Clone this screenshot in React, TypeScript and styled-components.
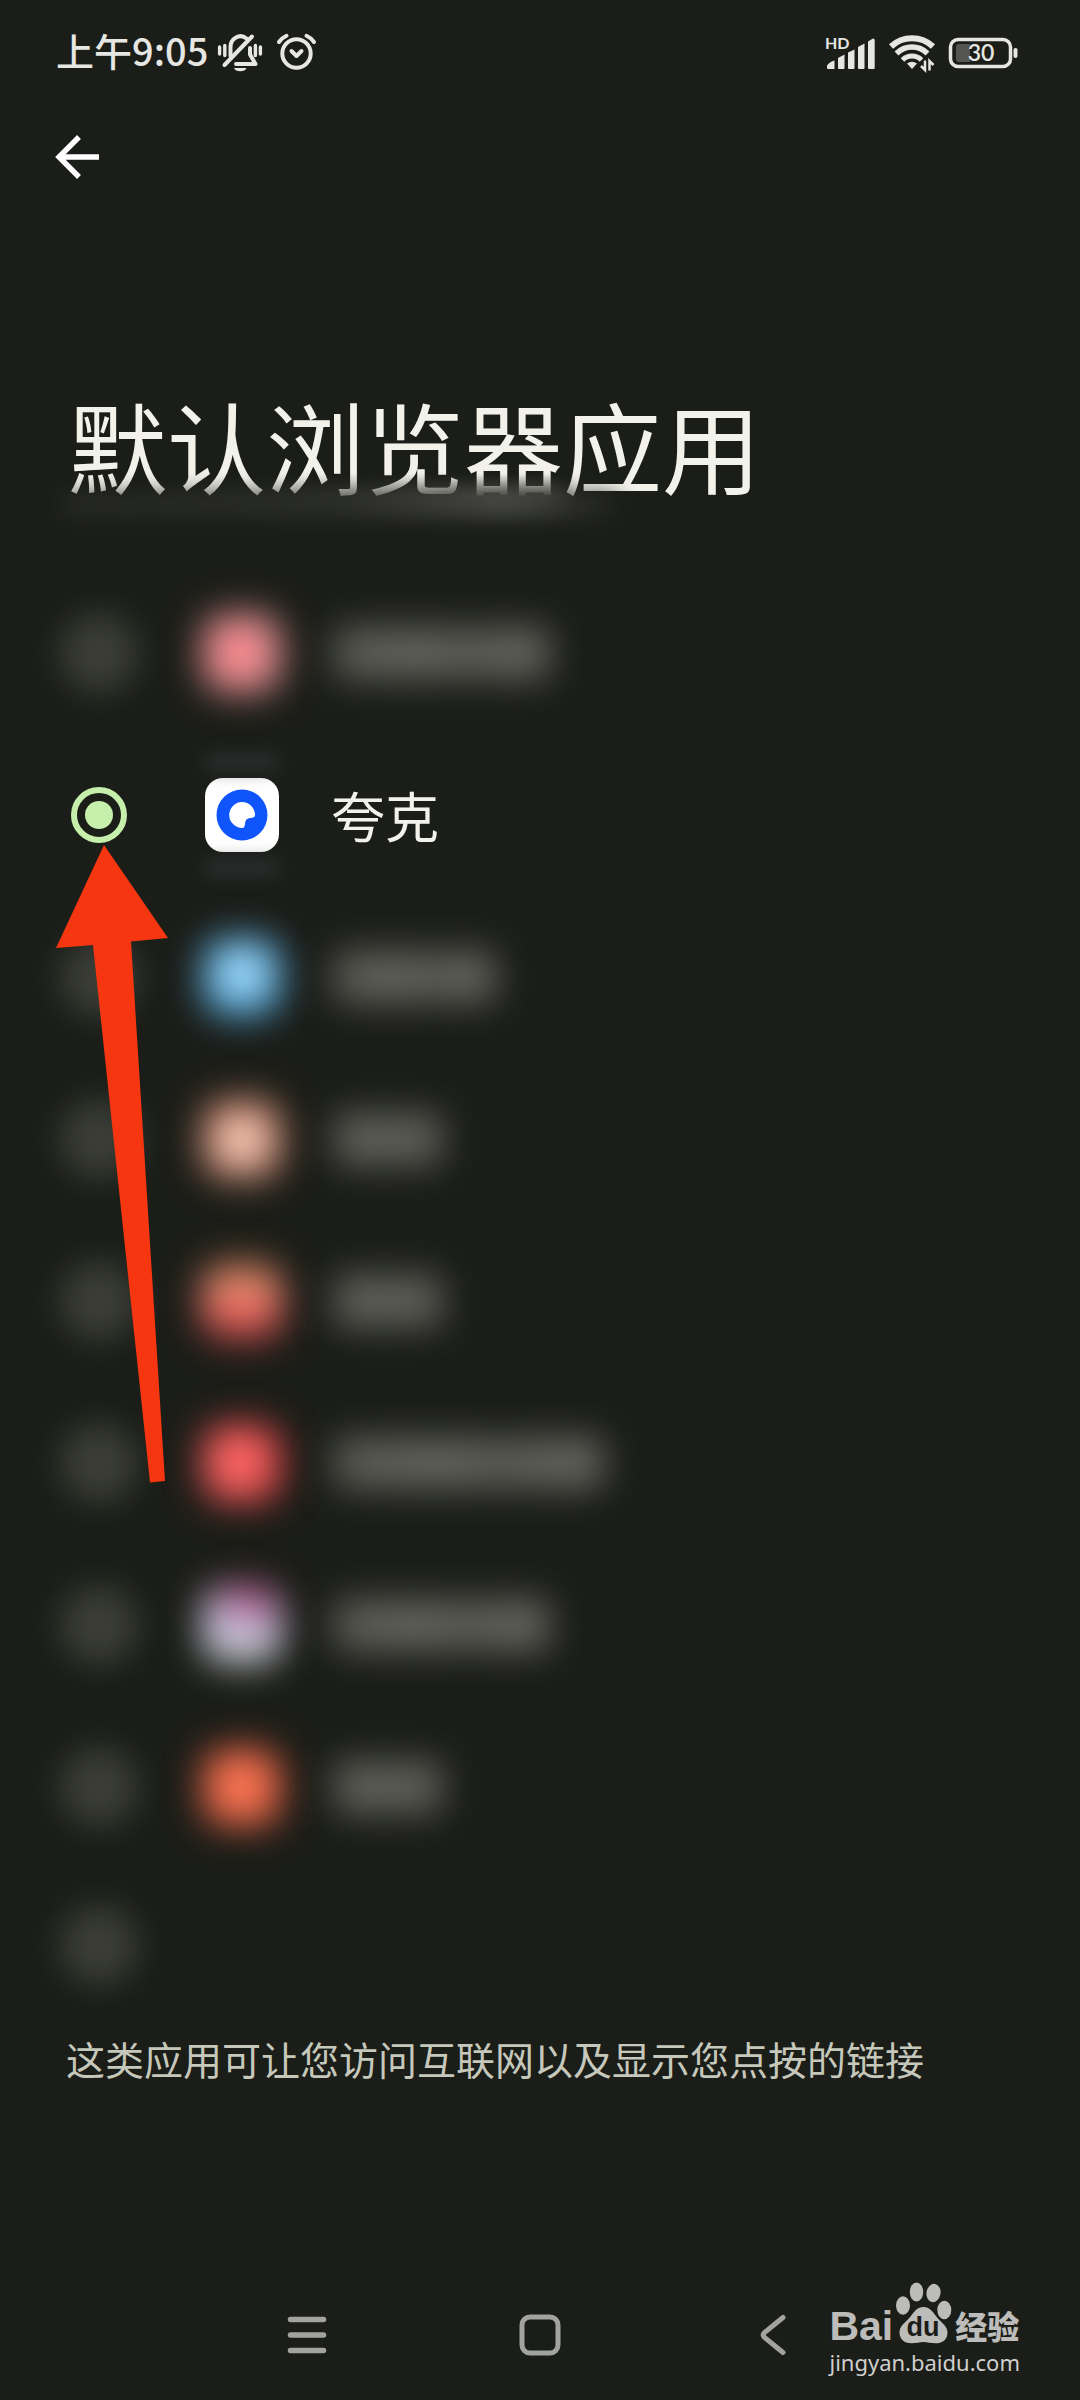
import React, { useState } from "react";
import styled, { createGlobalStyle, css } from "styled-components";

const BG = "#1b1d18";
const INK = "#f2f1ea";
const STATUS_INK = "#e6e6e3";
const NAV_INK = "#a2a3a1";
const MARK_INK = "#bcbcba";

const GlobalStyle = createGlobalStyle`
  *, *::before, *::after { box-sizing: border-box; }
  html, body { margin: 0; background: ${BG}; }
  body { font-family: "Noto Sans CJK SC", "Noto Sans", sans-serif; color: ${INK}; }
  button { border: 0; padding: 0; margin: 0; background: none; color: inherit; font: inherit; cursor: pointer; }
`;

const Screen = styled.div`
  position: relative;
  min-height: 100vh;
  display: flex;
  flex-direction: column;
  overflow: hidden;
  background: ${BG};
`;

const StatusBar = styled.header`
  height: 104px;
  padding: 2px 62px 0 56px;
  display: flex;
  align-items: center;
  justify-content: space-between;
  color: ${STATUS_INK};

  svg {
    overflow: visible;
  }
`;

const StatusGroup = styled.div<{ $gap: number }>`
  display: flex;
  align-items: center;
  gap: ${(p) => p.$gap}px;
`;

const Clock = styled.time`
  padding-bottom: 6px;
  font-size: 38px;
  line-height: 48px;
  font-weight: 500;
`;

const TopBar = styled.div`
  height: 106px;
  padding: 0 48px;
  display: flex;
  align-items: center;
`;

const BackButton = styled.button`
  width: 58px;
  height: 58px;
  display: grid;
  place-items: center;
`;

const Title = styled.h1`
  position: relative;
  margin: 174px 68px 0;
  font-size: 99px;
  line-height: 120px;
  font-weight: 400;
`;

const TitleFade = styled.span`
  position: absolute;
  left: 60px;
  top: 90px;
  width: 450px;
  height: 50px;
  background: linear-gradient(to bottom, rgba(62, 63, 58, 0), rgba(62, 63, 58, 0.9) 22px, rgba(44, 46, 41, 0.5) 36px, rgba(27, 29, 24, 0));
  mask-image: linear-gradient(
    to right,
    transparent,
    rgba(0, 0, 0, 0.15) 130px,
    rgba(0, 0, 0, 0.6) 290px,
    #000 360px,
    #000 420px,
    transparent
  );
`;

const TitleGlow = styled.span`
  position: absolute;
  left: -8px;
  top: 108px;
  width: 560px;
  height: 26px;
  border-radius: 13px;
  background: linear-gradient(to right, #292b27, #30322d 50%, #50514c 80%, #20221d);
  filter: blur(10px);
  opacity: 0.75;
`;

const AppList = styled.div`
  margin-top: 68px;
  display: flex;
  flex-direction: column;
`;

const Row = styled.label`
  position: relative;
  height: 162px;
  padding: 0 71px;
  display: flex;
  align-items: center;
  cursor: pointer;

  &:last-child {
    height: 154px;
  }
`;

const obscured = css`
  filter: blur(18px);
`;

const Radio = styled.input<{ $hidden: boolean }>`
  appearance: none;
  flex: none;
  width: 56px;
  height: 56px;
  margin: 0;
  border: 6px solid #c4c8ba;
  border-radius: 50%;
  display: grid;
  place-items: center;
  ${(p) => p.$hidden && obscured}

  &:checked {
    border-color: #c6efac;
  }

  &:checked::before {
    content: "";
    width: 28px;
    height: 28px;
    border-radius: 50%;
    background: #c6efac;
  }
`;

const HiddenIcon = styled.span<{ $fill: string }>`
  flex: none;
  width: 80px;
  height: 80px;
  margin-left: 75px;
  border-radius: 24px;
  background: ${(p) => p.$fill};
  ${obscured}
`;

const HiddenName = styled.span<{ $chars: number }>`
  flex: none;
  width: ${(p) => p.$chars * 54}px;
  height: 52px;
  margin-left: 51px;
  border-radius: 8px;
  background: linear-gradient(to right, #595a54, #64655f 40%, #5a5b55 60%, #676862);
  ${obscured}
`;

const AppIcon = styled.span`
  position: relative;
  flex: none;
  width: 74px;
  height: 74px;
  margin-left: 78px;
  display: grid;

  &::before,
  &::after {
    content: "";
    position: absolute;
    left: 0;
    right: 0;
    height: 12px;
    background: #323638;
    filter: blur(9px);
  }
  &::before {
    top: -22px;
  }
  &::after {
    bottom: -22px;
  }
`;

const AppName = styled.span`
  margin-left: 52px;
  font-size: 54px;
  line-height: 72px;
`;

const Pointer = styled.svg`
  position: absolute;
  left: 56px;
  top: 111px;
  z-index: 1;
  pointer-events: none;
`;

const Note = styled.p`
  margin: 6px 66px 0;
  padding-top: 2px;
  font-size: 39px;
  line-height: 56px;
  color: #c5c8bb;
`;

const NavBar = styled.nav`
  height: 130px;
  margin-top: auto;
  display: flex;
  align-items: center;
  justify-content: center;
  gap: 185px;
  color: ${NAV_INK};
`;

const NavButton = styled.button`
  width: 48px;
  height: 48px;
  display: grid;
  place-items: center;
`;

const Watermark = styled.a`
  position: absolute;
  right: 60px;
  bottom: 20px;
  display: flex;
  flex-direction: column;
  align-items: flex-start;
  color: ${MARK_INK};
  text-decoration: none;
`;

const Brand = styled.span`
  display: flex;
  align-items: flex-end;
  gap: 2px;
  height: 62px;
`;

const BrandLatin = styled.span`
  font-family: "Liberation Sans", Arial, sans-serif;
  font-size: 41px;
  line-height: 36px;
  font-weight: 700;
`;

const BrandHan = styled.span`
  font-size: 32px;
  line-height: 38px;
  font-weight: 900;
`;

const Site = styled.span`
  font-family: "Noto Sans", sans-serif;
  font-size: 22px;
  line-height: 36px;
  color: #cfcfcd;
`;

const MutedBell = () => (
  <svg width="50" height="40" viewBox="217 33 50 40" fill="none" stroke="currentColor" strokeWidth="3.4" strokeLinecap="round" aria-hidden="true">
    <path d="M219.600 47v7M224.800 45.500v10M260.400 47v7M255.400 45.500v10" />
    <path d="M230.500 56V47.500a10 11 0 0 1 16-9" strokeWidth="4" />
    <path d="M252 36.500 224.500 65" strokeWidth="4" />
    <path d="M250 48v6.500l5.500 9.500H236" strokeWidth="4" strokeLinejoin="round" />
    <path d="M234 68h12.500a6.500 4.500 0 0 1-12.500 0z" fill="currentColor" stroke="none" />
  </svg>
);

const Alarm = () => (
  <svg width="42" height="40" viewBox="276 33 42 40" fill="none" stroke="currentColor" strokeWidth="4" strokeLinecap="round" aria-hidden="true">
    <circle cx="296.500" cy="53.500" r="14.200" />
    <path d="m291.500 51 5 5 5-5" strokeLinejoin="round" />
    <path d="M279 42a19 19 0 0 1 7.500-6.200M314 42a19 19 0 0 0-7.500-6.200" />
  </svg>
);

const Signal = () => (
  <svg width="52" height="40" viewBox="824 32 52 40" fill="currentColor" aria-hidden="true">
    <text x="825" y="48" fontSize="16" fontWeight="700" fontFamily="Lato, sans-serif">HD</text>
    <path d="M827 67v-2.500q3-4 7.500-5v8.500h-6.500q-1 0-1-1zM838 67V57l6.500-3.500V67q0 1-1 1H839q-1 0-1-1zM848 67V51.500l6.500-3V67q0 1-1 1H849q-1 0-1-1zM858 67V46l6.500-3.500V67q0 1-1 1H859q-1 0-1-1zM868 67V40.500l5-3q1.700 0 1.700 1.500v28q0 1-1 1H869q-1 0-1-1z" />
  </svg>
);

const Wifi = () => (
  <svg width="48" height="38" viewBox="887 34 48 38" fill="none" stroke="currentColor" aria-hidden="true">
    <path d="M890 46.500a31 31 0 0 1 42 0" strokeWidth="6" />
    <path d="M895.500 53.500a22 22 0 0 1 31 0" strokeWidth="5.500" />
    <path d="M901.500 60a13.500 13.500 0 0 1 19 0" strokeWidth="5" />
    <path d="m911 69-5-5.500q5-3.500 10 0z" fill="currentColor" stroke="none" />
    <path d="M924 60.500V70l-4-4M928.500 70.500V61l4 4" strokeWidth="2.500" />
  </svg>
);

const Battery = () => (
  <svg width="70" height="32" viewBox="948 36 70 32" fill="none" aria-hidden="true">
    <rect x="950.500" y="38.500" width="60" height="27" rx="7.500" stroke="currentColor" strokeWidth="3.500" />
    <path d="M970 43h-11q-3 0-3 3v12q0 3 3 3h11z" fill="#555653" />
    <rect x="1013.500" y="47" width="4" height="10" rx="2" fill="currentColor" />
    <text x="981" y="60" textAnchor="middle" fontSize="23" fontWeight="600" fontFamily="Lato, sans-serif" fill="currentColor">30</text>
  </svg>
);

const BackArrow = () => (
  <svg width="46" height="46" viewBox="54 134 46 46" fill="none" stroke="#fff" strokeWidth="5.400" aria-hidden="true">
    <path d="M99 157H60M79 137 59 157l20 20" />
  </svg>
);

const QuarkLogo = () => (
  <svg width="74" height="74" viewBox="0 0 74 74" aria-hidden="true">
    <rect width="74" height="74" rx="18" fill="#fff" />
    <circle cx="37" cy="37" r="25.500" fill="#0f55fb" />
    <path d="M37 24a13 13 0 0 1 13 13.500q-.3 2-2.500 2.200Q40 39.500 40 46q-.3 3.700-2.500 4A13 13 0 0 1 37 24z" fill="#fff" />
  </svg>
);

const Paw = () => (
  <svg width="58" height="63" viewBox="894 2284 58 63" fill="currentColor" aria-hidden="true">
    <ellipse cx="902" cy="2308.500" rx="7" ry="9.300" />
    <ellipse cx="915.500" cy="2295" rx="6.700" ry="9.500" />
    <ellipse cx="932.500" cy="2296" rx="7" ry="9.200" transform="rotate(10 932.500 2296)" />
    <ellipse cx="943.300" cy="2313" rx="7" ry="9.300" />
    <path d="M922.500 2310c7 0 10 6 14 11 5 5.500 10 8.500 10 14.500 0 8-6 10.800-12 10.800-5 0-8-1.300-12-1.300s-7 1.300-12 1.300c-6 0-12-3-12-11 0-6 5-9 10-14.500 4-5 7-10.800 14-10.800z" />
    <text x="922" y="2339" textAnchor="middle" fontSize="27" fontWeight="700" fontFamily="Liberation Sans, Arial, sans-serif" fill={BG}>du</text>
  </svg>
);

type AppEntry = { id: string; name?: string; fill?: string; chars?: number };

const apps: AppEntry[] = [
  { id: "app-1", chars: 4, fill: "radial-gradient(circle at 46% 50%, #ff8a92 25%, #dd8a8c 55%, #a08a84)" },
  { id: "quark", name: "夸克" },
  { id: "app-3", chars: 3, fill: "radial-gradient(circle at 50% 46%, #b4e6ff 22%, #5aa8dd 52%, #1f7698)" },
  { id: "app-4", chars: 2, fill: "radial-gradient(circle at 50% 52%, #ffd6c6 22%, #cf907b 52%, #a2583a)" },
  { id: "app-5", chars: 2, fill: "linear-gradient(to bottom, #9c6a44, #f58d78 42%, #f46c62 60%, #9a3438)" },
  { id: "app-6", chars: 5, fill: "radial-gradient(circle at 44% 50%, #ff6a68 32%, #dc4a4b 58%, #a51f25)" },
  { id: "app-7", chars: 4, fill: "radial-gradient(circle at 60% 14%, #b2588c 12%, rgba(178, 88, 140, 0) 48%), linear-gradient(to bottom, #b0a0b0, #cfd2f2 50%, #b2b4ac)" },
  { id: "app-8", chars: 2, fill: "radial-gradient(circle at 48% 50%, #ff7856 32%, #d95f43 58%, #b5401f)" },
  { id: "none" },
];

export default function App() {
  const [selected, setSelected] = useState("quark");

  return (
    <Screen>
      <GlobalStyle />
      <StatusBar>
        <StatusGroup $gap={9}>
          <Clock>上午9:05</Clock>
          <MutedBell />
          <Alarm />
        </StatusGroup>
        <StatusGroup $gap={12}>
          <Signal />
          <Wifi />
          <Battery />
        </StatusGroup>
      </StatusBar>

      <TopBar>
        <BackButton type="button" aria-label="返回">
          <BackArrow />
        </BackButton>
      </TopBar>

      <main>
        <Title>
          默认浏览器应用
          <TitleFade />
          <TitleGlow />
        </Title>

        <AppList role="radiogroup" aria-label="默认浏览器应用">
          {apps.map((app) => (
            <Row key={app.id}>
              <Radio
                type="radio"
                name="browser"
                value={app.id}
                aria-label={app.name ?? app.id}
                checked={selected === app.id}
                onChange={() => setSelected(app.id)}
                $hidden={!app.name}
              />
              {app.fill && <HiddenIcon $fill={app.fill} />}
              {app.chars && <HiddenName $chars={app.chars} />}
              {app.name && (
                <>
                  <AppIcon>
                    <QuarkLogo />
                  </AppIcon>
                  <AppName>{app.name}</AppName>
                  <Pointer width="112" height="638" viewBox="56 845 112 638" aria-hidden="true">
                    <path d="M104 845 168 938 131 941.500 165 1481 150 1482.500 93 945 56 948z" fill="#f63610" />
                  </Pointer>
                </>
              )}
            </Row>
          ))}
        </AppList>

        <Note>这类应用可让您访问互联网以及显示您点按的链接</Note>
      </main>

      <NavBar>
        <NavButton type="button" aria-label="最近任务">
          <svg width="40" height="40" viewBox="0 0 40 40" stroke="currentColor" strokeWidth="5.500" strokeLinecap="round" aria-hidden="true">
            <path d="M3.500 4.500h33M3.500 20h33M3.500 35.500h33" />
          </svg>
        </NavButton>
        <NavButton type="button" aria-label="主屏幕">
          <svg width="42" height="42" viewBox="0 0 42 42" fill="none" stroke="currentColor" strokeWidth="5" aria-hidden="true">
            <rect x="3" y="3" width="36" height="36" rx="8" />
          </svg>
        </NavButton>
        <NavButton type="button" aria-label="后退">
          <svg width="26" height="42" viewBox="0 0 26 42" fill="none" stroke="currentColor" strokeWidth="5" strokeLinecap="round" aria-hidden="true">
            <path d="M23 3.500 4.500 18.500q-2.500 2.500 0 5L23 38.500" />
          </svg>
        </NavButton>
      </NavBar>

      <Watermark href="#jingyan">
        <Brand>
          <BrandLatin>Bai</BrandLatin>
          <Paw />
          <BrandHan>经验</BrandHan>
        </Brand>
        <Site>jingyan.baidu.com</Site>
      </Watermark>
    </Screen>
  );
}
